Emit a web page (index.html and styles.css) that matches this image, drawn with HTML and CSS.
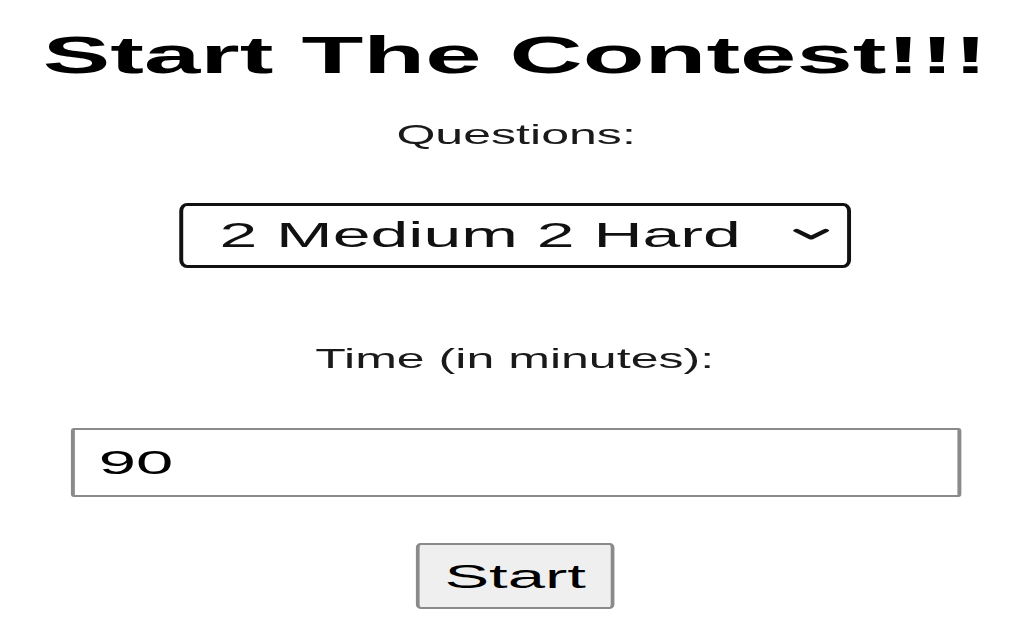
FILE: index.html
```html
<!DOCTYPE html>
<html lang="en">
<head>
<meta charset="utf-8">
<title>Start The Contest</title>
<link rel="stylesheet" href="styles.css">
</head>
<body>
<main class="page">
  <h1 class="title">Start The Contest!!!</h1>
  <label class="label label-questions" for="questions">Questions:</label>
  <div class="select-box">
    <select id="questions" class="select">
      <option>2 Medium 2 Hard</option>
    </select>
    <svg class="chevron" viewBox="0 0 19.5 13" width="19.5" height="13" aria-hidden="true">
      <path d="M2.4 2.6 L9.75 9.8 L17.1 2.6" fill="none" stroke="#111" stroke-width="3.4" stroke-linecap="round" stroke-linejoin="round"/>
    </svg>
  </div>
  <label class="label label-time" for="time">Time (in minutes):</label>
  <input id="time" class="input" type="text" value="90">
  <button class="button" type="button">Start</button>
</main>
</body>
</html>
```

FILE: styles.css
```css
html, body {
  margin: 0;
  padding: 0;
  background: #ffffff;
  overflow: hidden;
}

.page {
  width: 518px;
  box-sizing: border-box;
  padding-left: 5px;
  display: flex;
  flex-direction: column;
  align-items: center;
  transform: scaleX(1.97);
  transform-origin: 0 0;
  font-family: "Liberation Sans", Arial, sans-serif;
  color: #000;
}

.title {
  margin: 26px 0 0;
  font-size: 51.4px;
  line-height: 59px;
  font-weight: bold;
  white-space: nowrap;
}

.label {
  font-size: 27.2px;
  line-height: 31px;
  color: #1a1a1a;
  white-space: nowrap;
  transform: scaleX(0.935);
}

.label-questions {
  margin-top: 34px;
}

.label-time {
  margin-top: 75px;
}

.select-box {
  margin-top: 53px;
  width: 341px;
  height: 65px;
  box-sizing: border-box;
  border-style: solid;
  border-color: #111;
  border-width: 3px 2.4px;
  border-radius: 4px / 8px;
  display: flex;
  align-items: center;
  padding: 0 9px 0 18.4px;
  background: #fff;
}

.select {
  flex: 1;
  appearance: none;
  -webkit-appearance: none;
  border: none;
  outline: none;
  background: transparent;
  padding: 0;
  margin: 0;
  font-family: "Liberation Sans", Arial, sans-serif;
  font-size: 34.5px;
  line-height: 39px;
  height: 39px;
  color: #111;
}

.chevron {
  flex: none;
  display: block;
  margin-top: -3px;
}

.input {
  margin-top: 54px;
  width: 452px;
  height: 69px;
  box-sizing: border-box;
  border: 2px solid #8a8a8a;
  border-radius: 1.5px / 3px;
  padding: 0 0 0 12.7px;
  font-family: "Liberation Sans", Arial, sans-serif;
  font-size: 34px;
  line-height: 39px;
  color: #000;
  background: #fff;
  outline: none;
}

.button {
  margin-top: 46px;
  width: 100.5px;
  height: 66px;
  box-sizing: border-box;
  border: 2px solid #8a8a8a;
  border-radius: 2.5px / 5px;
  background: #efefef;
  padding: 0;
  font-family: "Liberation Sans", Arial, sans-serif;
  font-size: 34px;
  line-height: 39px;
  color: #000;
}
```
